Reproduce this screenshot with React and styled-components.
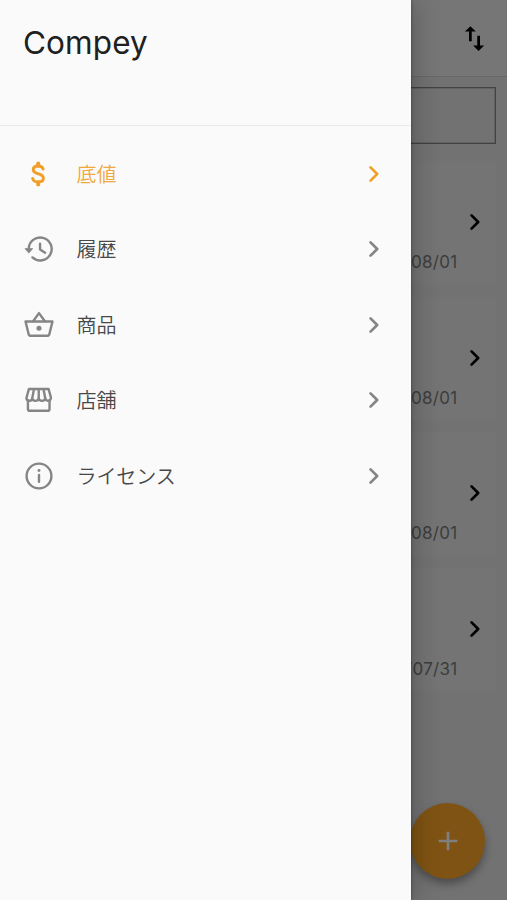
import React from "react";
import styled, { createGlobalStyle } from "styled-components";
import { MdImportExport, MdAdd } from "react-icons/md";

const GlobalStyle = createGlobalStyle`
  * { box-sizing: border-box; }
  body {
    margin: 0;
    font-family: Inter, "Noto Sans CJK JP", sans-serif;
  }
`;

const Screen = styled.div`
  position: relative;
  width: 507px;
  height: 900px;
  overflow: hidden;
  background: #e4e4e4;
`;

const AppBar = styled.header`
  display: flex;
  align-items: center;
  justify-content: flex-end;
  height: 77px;
  padding-right: 16px;
  background: #ededed;
  border-bottom: 1px solid #cfcfcf;
  color: #000;
`;

const Content = styled.main`
  display: flex;
  flex-direction: column;
  padding: 10px 11px 0;
`;

const SearchBox = styled.div`
  height: 57px;
  margin-bottom: 17px;
  border: 1px solid #858585;
  box-shadow: inset 0 0 0 1px #c4c4c4;
`;

const CardList = styled.div`
  display: flex;
  flex-direction: column;
  gap: 12px;
`;

const PriceCard = styled.article`
  display: flex;
  flex-direction: column;
  align-items: flex-end;
  height: 123.5px;
  padding: 45px 5px 0 0;
  border-radius: 4px;
  background: #e9e9e9;
`;

const CardDate = styled.time`
  margin: 12px 33.5px 0 0;
  font-size: 17px;
  line-height: 24px;
  letter-spacing: 0.3px;
  color: #7a7a7a;
`;

const AddButton = styled.button`
  position: absolute;
  right: 22px;
  bottom: 21px;
  display: grid;
  place-items: center;
  width: 75px;
  height: 76px;
  padding: 0;
  border: 0;
  border-radius: 50%;
  background: #ffa726;
  color: #fff;
  box-shadow: 0 5px 9px rgba(0, 0, 0, 0.35);
`;

const Scrim = styled.div`
  position: absolute;
  inset: 0;
  background: rgba(0, 0, 0, 0.5);
`;

const Drawer = styled.aside`
  position: absolute;
  inset: 0 auto 0 0;
  width: 411px;
  background: #fafafa;
  box-shadow: 0 0 3px rgba(0, 0, 0, 0.4), 4px 0 24px rgba(0, 0, 0, 0.22);
`;

const DrawerHeader = styled.div`
  height: 126px;
  padding: 23px 23px 0;
  border-bottom: 1px solid #e9e9e9;
`;

const Title = styled.h1`
  margin: 0;
  font-size: 31.5px;
  font-weight: 400;
  line-height: 40px;
  letter-spacing: 0.1px;
  color: #202020;
`;

const Menu = styled.nav`
  display: flex;
  flex-direction: column;
  padding-top: 10px;
`;

const MenuItem = styled.a`
  display: grid;
  grid-template-columns: 53.5px 1fr 32px;
  align-items: center;
  height: 75.5px;
  padding: 0 21.5px 0 23px;
  color: ${(p) => (p.$active ? "#f0a02a" : "#858585")};
`;

const MenuLabel = styled.span`
  font-family: "Noto Sans CJK JP", sans-serif;
  font-size: 20px;
  font-weight: 350;
  line-height: 28px;
  letter-spacing: -0.1px;
  color: ${(p) => (p.$active ? "#f0a840" : "#484848")};
`;

const Glyph = styled.svg`
  display: block;
  width: 32px;
  height: 32px;
  fill: none;
  stroke: currentColor;
  stroke-width: ${(p) => p.$weight || 2};
  stroke-linecap: round;
  stroke-linejoin: round;
`;

const Chevron = () => (
  <Glyph viewBox="0 0 24 24">
    <path d="M9.4 7l5 5-5 5" />
  </Glyph>
);

const Dollar = () => (
  <Glyph viewBox="0 0 24 24" $weight={2.2}>
    <path d="M15.1 8.3C14.7 6.9 13.5 6 11.4 6 9.2 6 7.7 7 7.7 8.7c0 1.6 1.2 2.5 3.7 3.1 2.7.7 3.9 1.7 3.9 3.4 0 1.7-1.6 2.8-3.9 2.8-2.2 0-3.7-1-4.2-2.7" />
    <path d="M11.4 4.1v1.7M11.4 18.2v1.7" strokeWidth="3" />
  </Glyph>
);

const History = () => (
  <Glyph viewBox="0 0 24 24" $weight={1.8}>
    <path d="M4.3 12a8.6 8.6 0 1 1 2.8 6.3" />
    <path d="M12.8 8v4.4l3.8 2.4" />
    <path d="M1.7 11.8h5.4l-2.7 2.9z" fill="currentColor" strokeWidth="0.8" />
  </Glyph>
);

const Basket = () => (
  <Glyph viewBox="0 0 24 24" $weight={1.8}>
    <path d="M1.9 9.4h20.2l-2.3 9.3c-.2.9-.8 1.4-1.7 1.4H5.9c-.9 0-1.5-.5-1.7-1.4z" />
    <path d="M7.6 9.2L12 3.1l4.4 6.1" />
    <circle cx="12" cy="14.4" r="1.9" fill="currentColor" stroke="none" />
  </Glyph>
);

const Storefront = () => (
  <Glyph viewBox="0 0 24 24" $weight={1.8}>
    <path d="M4.4 3.8h14.8l1.7 6.1a2.1 2.1 0 0 1-4.2 1 2.5 2.2 0 0 1-4.9 0 2.5 2.2 0 0 1-4.9 0 2.1 2.1 0 0 1-4.2-1z" />
    <path d="M8.2 4l-1.3 6.8M11.8 4v6.8M15.4 4l1.3 6.8M3.7 12.3v6.4c0 .9.5 1.4 1.4 1.4h13.4c.9 0 1.4-.5 1.4-1.4v-6.4" />
  </Glyph>
);

const Info = () => (
  <Glyph viewBox="0 0 24 24" $weight={1.8}>
    <circle cx="12" cy="12" r="9.3" />
    <path d="M12 11.2v5.2" />
    <path d="M12 7.8v.1" strokeWidth="2.2" />
  </Glyph>
);

const menu = [
  { label: "底値", icon: Dollar, active: true },
  { label: "履歴", icon: History },
  { label: "商品", icon: Basket },
  { label: "店舗", icon: Storefront },
  { label: "ライセンス", icon: Info },
];

const dates = ["2021/08/01", "2021/08/01", "2021/08/01", "2021/07/31"];

export default function App() {
  return (
    <Screen>
      <GlobalStyle />
      <AppBar>
        <MdImportExport size={33} />
      </AppBar>
      <Content>
        <SearchBox />
        <CardList>
          {dates.map((date, i) => (
            <PriceCard key={i}>
              <Chevron />
              <CardDate>{date}</CardDate>
            </PriceCard>
          ))}
        </CardList>
      </Content>
      <AddButton aria-label="追加">
        <MdAdd size={32} />
      </AddButton>
      <Scrim />
      <Drawer>
        <DrawerHeader>
          <Title>Compey</Title>
        </DrawerHeader>
        <Menu>
          {menu.map(({ label, icon: Icon, active }) => (
            <MenuItem key={label} $active={active}>
              <Icon />
              <MenuLabel $active={active}>{label}</MenuLabel>
              <Chevron />
            </MenuItem>
          ))}
        </Menu>
      </Drawer>
    </Screen>
  );
}
